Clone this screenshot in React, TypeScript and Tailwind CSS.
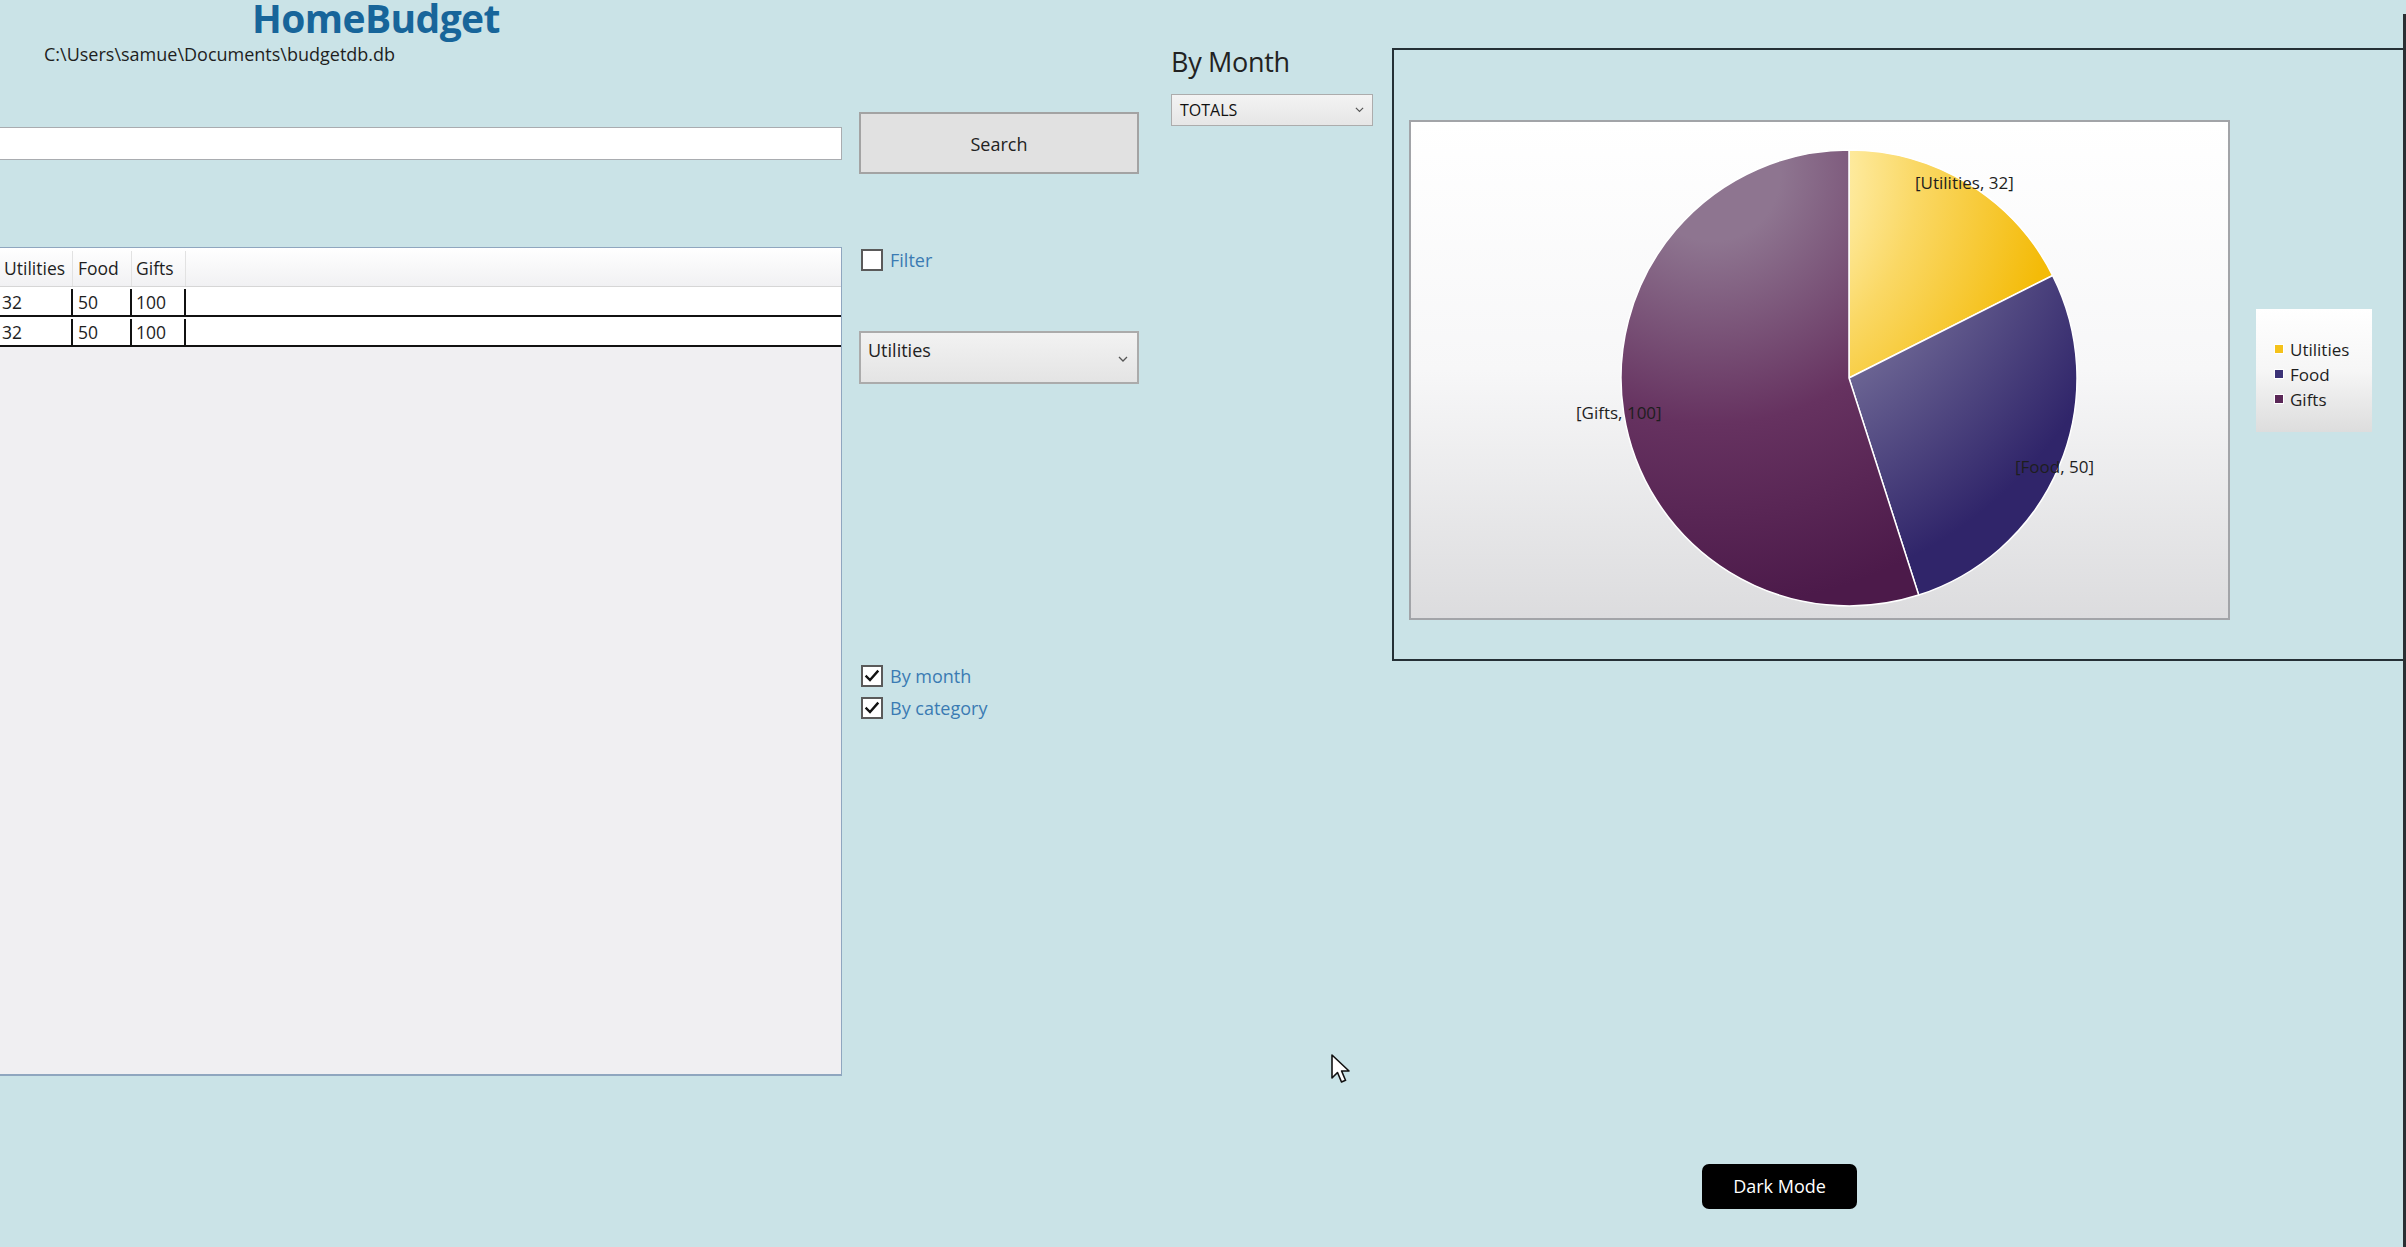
import React from "react";

const F = { fontFamily: '"Open Sans", "Noto Sans", Arial, sans-serif' };

function Check() {
  return (
    <svg width="16" height="16" viewBox="0 0 16 16" className="block">
      <path d="M2.5 8.5 L6 12 L13.5 3.5" fill="none" stroke="#111" strokeWidth="2.4" strokeLinecap="square" />
    </svg>
  );
}

function CheckRow({ label, checked }: { label: string; checked: boolean }) {
  return (
    <div className="flex items-center h-[22px] pl-[2px]">
      <div className="w-[22px] h-[22px] border-2 border-[#5a5a5a] bg-white flex items-center justify-center">
        {checked ? <Check /> : null}
      </div>
      <span className="ml-[7px] text-[18px] leading-[22px] text-[#3a7bb3]">{label}</span>
    </div>
  );
}

function Chevron({ size = 10 }: { size?: number }) {
  return (
    <svg width={size} height={size * 0.6} viewBox="0 0 10 6" className="block">
      <path d="M1 1 L5 5 L9 1" fill="none" stroke="#555" strokeWidth="1.3" />
    </svg>
  );
}

function Pie() {
  const cx = 438;
  const cy = 256;
  const r = 228;
  const pt = (deg: number) => {
    const a = (deg * Math.PI) / 180;
    return [cx + r * Math.sin(a), cy - r * Math.cos(a)];
  };
  const a1 = (32 / 182) * 360;
  const a2 = a1 + (50 / 182) * 360;
  const [x0, y0] = pt(0);
  const [x1, y1] = pt(a1);
  const [x2, y2] = pt(a2);
  const gx = cx - 0.6 * r;
  const gy = cy - 0.9 * r;
  return (
    <svg width="817" height="496" viewBox="0 0 817 496" className="block">
      <defs>
        <radialGradient id="gU" gradientUnits="userSpaceOnUse" cx={gx} cy={gy} r={2 * r}>
          <stop offset="0.25" stopColor="#fff0b0" />
          <stop offset="0.45" stopColor="#fad865" />
          <stop offset="0.75" stopColor="#f4bb08" />
        </radialGradient>
        <radialGradient id="gF" gradientUnits="userSpaceOnUse" cx={gx} cy={gy} r={2 * r}>
          <stop offset="0.45" stopColor="#78729c" />
          <stop offset="0.95" stopColor="#30256a" />
        </radialGradient>
        <radialGradient id="gG" gradientUnits="userSpaceOnUse" cx={gx} cy={gy} r={2 * r}>
          <stop offset="0.15" stopColor="#8e7590" />
          <stop offset="0.55" stopColor="#663260" />
          <stop offset="0.95" stopColor="#4c1a4a" />
        </radialGradient>
      </defs>
      <path d={`M${cx} ${cy} L${x0} ${y0} A${r} ${r} 0 0 1 ${x1} ${y1} Z`} fill="url(#gU)" stroke="#fff" strokeWidth="1.5" />
      <path d={`M${cx} ${cy} L${x1} ${y1} A${r} ${r} 0 0 1 ${x2} ${y2} Z`} fill="url(#gF)" stroke="#fff" strokeWidth="1.5" />
      <path d={`M${cx} ${cy} L${x2} ${y2} A${r} ${r} 0 1 1 ${x0} ${y0} Z`} fill="url(#gG)" stroke="#fff" strokeWidth="1.5" />
      <g style={F} fontSize="17" fill="#1e1e1e">
        <text x="504" y="67">[Utilities, 32]</text>
        <text x="604" y="351">[Food, 50]</text>
        <text x="165" y="297">[Gifts, 100]</text>
      </g>
    </svg>
  );
}

function Legend() {
  const items = [
    { label: "Utilities", c: "#f5c21a" },
    { label: "Food", c: "#3b3276" },
    { label: "Gifts", c: "#5a2757" },
  ];
  return (
    <div className="w-[116px] h-[123px] bg-gradient-to-b from-white via-[#f6f6f6] to-[#dddddd] pl-[18px] pt-[28px] flex flex-col">
      {items.map((it) => (
        <div key={it.label} className="flex items-center h-[25px]">
          <div className="w-[10px] h-[10px] border border-white" style={{ backgroundColor: it.c }} />
          <span className="ml-[6px] text-[17px] leading-[25px] text-[#1e1e1e]">{it.label}</span>
        </div>
      ))}
    </div>
  );
}

export default function App() {
  return (
    <div
      className="relative w-[2406px] h-[1247px] bg-[#cae3e7] overflow-hidden flex flex-row text-[#1e1e1e]"
      style={F}
    >
      {/* Left column */}
      <div className="w-[842px] flex flex-col shrink-0">
        <div className="pl-[252px] h-[36px] text-[39px] leading-[36px] font-bold text-[#17659a] tracking-[-0.6px]">
          HomeBudget
        </div>
        <div className="pl-[44px] mt-[6px] h-[24px] text-[18px] leading-[24px] text-[#1e1e1e]">
          C:\Users\samue\Documents\budgetdb.db
        </div>
        <div className="mt-[61px] h-[33px] bg-white border border-[#a9acb0] border-l-0" />
        <div className="mt-[87px] h-[829px] bg-[#f0eff2] border-t border-r border-[#8fa6bf] border-b-2 flex flex-col">
          <div className="h-[39px] pt-[3px] flex flex-row bg-gradient-to-b from-white to-[#f1f1f3] border-b border-[#d6d6d6] text-[17.5px]">
            <div className="w-[73px] pl-[4px] flex items-center border-r border-[#e2e2e2]">Utilities</div>
            <div className="w-[59px] pl-[5px] flex items-center border-r border-[#e2e2e2]">Food</div>
            <div className="w-[54px] pl-[4px] flex items-center border-r border-[#e2e2e2]">Gifts</div>
            <div className="flex-1" />
          </div>
          {[0, 1].map((i) => (
            <div key={i} className="h-[30px] pt-[2px] flex flex-row bg-white border-b-2 border-[#111] text-[17.5px]">
              <div className="w-[73px] pl-[2px] flex items-center border-r-2 border-[#111]">32</div>
              <div className="w-[59px] pl-[5px] flex items-center border-r-2 border-[#111]">50</div>
              <div className="w-[54px] pl-[4px] flex items-center border-r-2 border-[#111]">100</div>
              <div className="flex-1" />
            </div>
          ))}
        </div>
      </div>

      {/* Middle column */}
      <div className="ml-[17px] w-[280px] flex flex-col shrink-0">
        <div className="mt-[112px] h-[62px] pt-[3px] bg-[#e1e1e1] border-2 border-[#a3a3a3] flex items-center justify-center text-[18px] text-[#222]">
          Search
        </div>
        <div className="mt-[75px]">
          <CheckRow label="Filter" checked={false} />
        </div>
        <div className="mt-[60px] h-[53px] bg-gradient-to-b from-[#f2f2f2] to-[#e4e4e4] border-2 border-[#ababab] flex flex-row justify-between px-[7px]">
          <span className="text-[18px] leading-[18px] mt-[8px] text-[#222]">Utilities</span>
          <div className="mt-[23px] mr-[2px]">
            <Chevron />
          </div>
        </div>
        <div className="mt-[281px]">
          <CheckRow label="By month" checked={true} />
        </div>
        <div className="mt-[10px]">
          <CheckRow label="By category" checked={true} />
        </div>
      </div>

      {/* By Month column */}
      <div className="ml-[32px] w-[202px] flex flex-col shrink-0">
        <div className="mt-[46px] h-[32px] text-[27px] leading-[32px] text-[#222] tracking-[-0.3px]">By Month</div>
        <div className="mt-[16px] h-[32px] bg-gradient-to-b from-[#f3f3f3] to-[#e6e6e6] border border-[#acacac] flex items-center justify-between px-[8px]">
          <span className="text-[16px] text-[#111]">TOTALS</span>
          <Chevron size={9} />
        </div>
      </div>

      {/* Chart column */}
      <div className="ml-[19px] w-[1011px] flex flex-col shrink-0">
        <div className="mt-[48px] h-[613px] border-l-2 border-t-2 border-b-2 border-[#253036] pl-[15px] pt-[70px] flex flex-row items-start">
          <div className="flex flex-row items-center gap-[26px]">
            <div className="w-[821px] h-[500px] border-2 border-[#a2a4a8] bg-gradient-to-b from-white via-[#f7f7f8] to-[#dcdcde]">
              <Pie />
            </div>
            <Legend />
          </div>
        </div>
        <div className="ml-[310px] mt-[503px] w-[155px] h-[45px] bg-black rounded-[7px] flex items-center justify-center text-white text-[18px]">
          Dark Mode
        </div>
      </div>

      {/* Right window edge */}
      <div className="w-[3px] mt-[14px] bg-[#2a2f33] shrink-0" />

      {/* Mouse cursor */}
      <svg className="absolute left-[1331px] top-[1054px]" width="22" height="32" viewBox="0 0 22 32">
        <path d="M1 1 L1 24 L6.5 18.5 L10.5 28 L14.5 26.3 L10.6 17 L18 17 Z" fill="#fff" stroke="#111" strokeWidth="1.6" strokeLinejoin="round" />
      </svg>
    </div>
  );
}
